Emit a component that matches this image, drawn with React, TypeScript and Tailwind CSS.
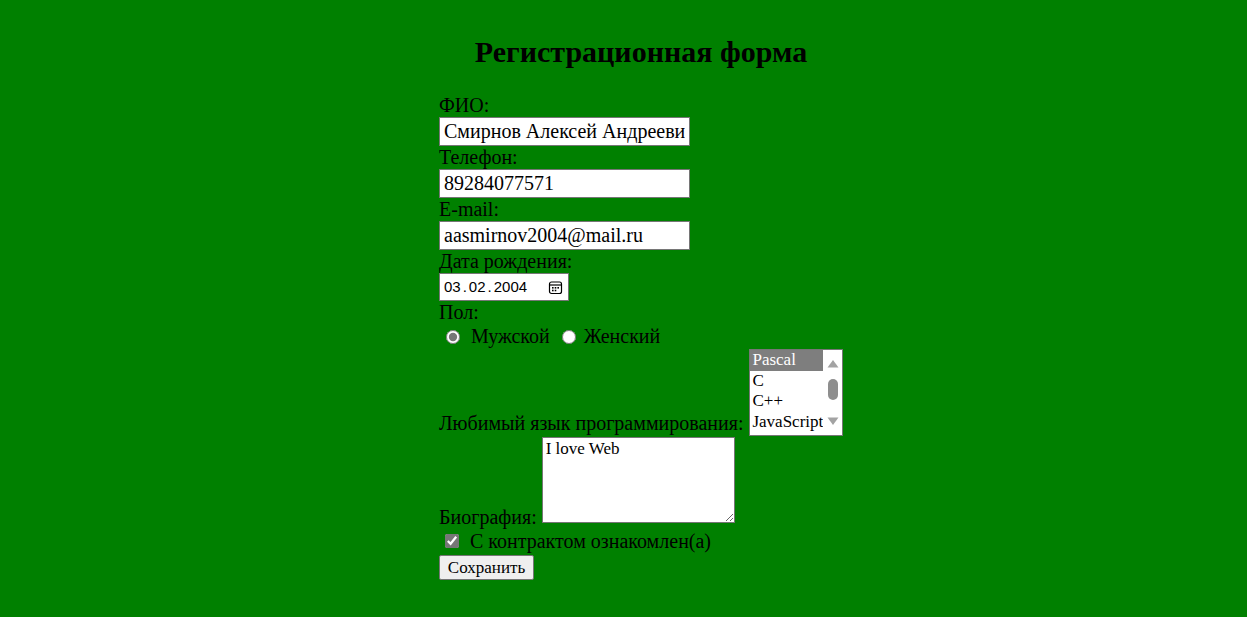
import React from "react";

function CalendarIcon() {
  return (
    <svg width="15" height="15" viewBox="0 0 15 15" fill="none">
      <rect x="1.5" y="2" width="12" height="11.5" rx="2" stroke="#000" strokeWidth="1.2" />
      <line x1="1.5" y1="5" x2="13.5" y2="5" stroke="#000" strokeWidth="1.2" />
      <rect x="4" y="7" width="1.6" height="1.6" fill="#000" />
      <rect x="6.7" y="7" width="1.6" height="1.6" fill="#000" />
      <rect x="9.4" y="7" width="1.6" height="1.6" fill="#000" />
      <rect x="4" y="9.7" width="1.6" height="1.6" fill="#000" />
      <rect x="6.7" y="9.7" width="1.6" height="1.6" fill="#000" />
    </svg>
  );
}

function ListBox() {
  const opts = ["Pascal", "C", "C++", "JavaScript"];
  return (
    <div className="flex w-[94px] h-[87px] border border-[#767676] bg-white text-[17px] leading-[20.7px]">
      <div className="flex-1 flex flex-col overflow-hidden">
        {opts.map((o, i) => (
          <div
            key={o}
            className={
              i === 0
                ? "bg-[#7e7e7e] text-white pl-[2px] whitespace-nowrap"
                : "text-black pl-[2px] whitespace-nowrap"
            }
          >
            {o}
          </div>
        ))}
      </div>
      <div className="w-[19px] flex flex-col items-center py-[9px]">
        <svg width="12" height="9" viewBox="0 0 12 9">
          <path d="M6 1 L11.5 8.5 L0.5 8.5 Z" fill="#a3a3a3" />
        </svg>
        <div className="w-[10px] h-[21px] rounded-[5px] bg-[#8e8e8e] mt-[11px]" />
        <div className="flex-1" />
        <svg width="12" height="9" viewBox="0 0 12 9">
          <path d="M0.5 0.5 L11.5 0.5 L6 8 Z" fill="#a3a3a3" />
        </svg>
      </div>
    </div>
  );
}

export default function App() {
  return (
    <div className="min-h-screen w-full bg-[#008000] text-black font-['Liberation_Serif',serif] text-[20px] leading-[23px]">
      <div className="pl-[439px] pt-[35px]">
        <div className="inline-block w-[404px]">
          <h2 className="text-center text-[30px] leading-[34px] font-bold mb-[25px]">Регистрационная форма</h2>
          <form className="flex flex-col items-start" onSubmit={(e) => e.preventDefault()}>
            <label className="block">ФИО:</label>
            <input
              type="text"
              defaultValue="Смирнов Алексей Андреевич"
              className="w-[251px] h-[29px] border border-[#767676] bg-white px-[4px] text-[20px] outline-none"
            />
            <label className="block">Телефон:</label>
            <input
              type="text"
              defaultValue="89284077571"
              className="w-[251px] h-[29px] border border-[#767676] bg-white px-[4px] text-[20px] outline-none"
            />
            <label className="block">E-mail:</label>
            <input
              type="text"
              defaultValue="aasmirnov2004@mail.ru"
              className="w-[251px] h-[29px] border border-[#767676] bg-white px-[4px] text-[20px] outline-none"
            />
            <label className="block">Дата рождения:</label>
            <div className="flex items-center justify-between w-[130px] h-[28px] border border-[#767676] bg-white pl-[4px] pr-[5px] font-['Liberation_Sans',sans-serif] text-[15px] leading-[18px]">
              <span>
                03<span className="mx-[2px]">.</span>02<span className="mx-[2px]">.</span>2004
              </span>
              <CalendarIcon />
            </div>
            <label className="block">Пол:</label>
            <div className="flex items-center h-[25px]">
              <input type="radio" name="sex" defaultChecked className="ml-[7px] mr-[11px] w-[14px] h-[14px] accent-[#767676]" />
              <span>Мужской</span>
              <input type="radio" name="sex" className="ml-[12px] mr-[8px] w-[14px] h-[14px] accent-[#767676]" />
              <span>Женский</span>
            </div>
            <div className="flex items-end">
              <span className="mr-[6px] mb-[1px] whitespace-nowrap">Любимый язык программирования:</span>
              <ListBox />
            </div>
            <div className="flex items-end mt-[1px]">
              <span className="mr-[5px] whitespace-nowrap">Биография:</span>
              <textarea
                defaultValue="I love Web"
                className="w-[193px] h-[86px] mb-[6px] border border-[#767676] bg-white px-[3px] pt-[1px] text-[17px] leading-[20px] outline-none"
              />
            </div>
            <label className="flex items-center h-[24px]">
              <input type="checkbox" defaultChecked className="ml-[6px] mr-[11px] w-[14px] h-[14px] accent-[#767676]" />
              <span>С контрактом ознакомлен(а)</span>
            </label>
            <button
              type="submit"
              className="mt-[2px] h-[25px] w-[95px] border border-[#767676] rounded-[2px] bg-[#efefef] text-[17px] leading-[20px]"
            >
              Сохранить
            </button>
          </form>
        </div>
      </div>
    </div>
  );
}
